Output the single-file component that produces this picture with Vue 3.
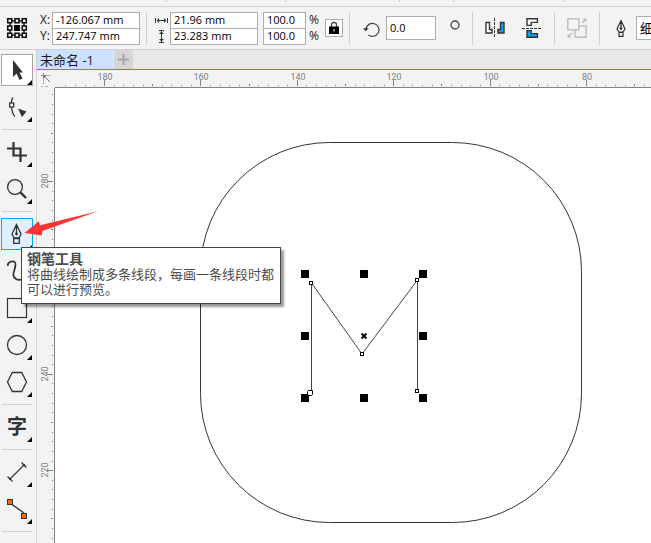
<script setup>
import { ref } from 'vue'

const posX = ref('-126.067 mm')
const posY = ref('247.747 mm')
const sizeW = ref('21.96 mm')
const sizeH = ref('23.283 mm')
const scaleX = ref('100.0')
const scaleY = ref('100.0')
const angle = ref('0.0')
const outline = ref('细')

const STEP = 9.64
// Ruler ticks: every fifth is taller, every tenth carries a number.
function ticks(origin, first, last, value) {
  const list = []
  for (let i = first; i <= last; i++) {
    const mod = ((i % 10) + 10) % 10
    list.push({
      at: Math.round(origin + i * STEP),
      len: mod === 0 ? 6 : mod === 5 ? 2 : 1,
      label: mod === 0 ? value - i * 2 : null
    })
  }
  return list
}
const hTicks = ticks(49, -4, 59, 180)
const vTicks = ticks(93, -9, 39, 280)

const handles = [301, 360, 419].flatMap(x => [270, 332, 394].map(y => ({ x, y })))
  .filter(h => !(h.x === 360 && h.y === 332))
const nodes = [[311, 283], [362, 354], [417, 280], [417, 391]]
const stripMarks = [166, 285, 399, 453, 563]
</script>

<template>
  <div class="app">
    <div class="strip">
      <svg class="strip-svg" aria-hidden="true">
        <rect v-for="m in stripMarks" :key="m" :x="m" y="0" width="1" height="2" fill="#d0d0d0" />
      </svg>
    </div>

    <header class="props">
      <svg class="origin" width="22" height="22" viewBox="0 0 22 22" aria-label="Object origin">
        <path d="M4 4H18V18H4Z" fill="none" stroke="#222" stroke-width="1.5" />
        <g fill="#fff" stroke="#111" stroke-width="1.6">
          <rect x="1.75" y="1.75" width="4" height="4" /><rect x="9" y="1.75" width="4" height="4" /><rect x="16.25" y="1.75" width="4" height="4" />
          <rect x="1.75" y="9" width="4" height="4" /><rect x="16.25" y="9" width="4" height="4" />
          <rect x="1.75" y="16.25" width="4" height="4" /><rect x="9" y="16.25" width="4" height="4" /><rect x="16.25" y="16.25" width="4" height="4" />
        </g>
        <rect x="8" y="8" width="6" height="6" fill="#000" />
      </svg>

      <div class="pair position">
        <label for="px">X:</label><input id="px" v-model="posX" class="wide" />
        <label for="py">Y:</label><input id="py" v-model="posY" class="wide" />
      </div>
      <i class="rule"></i>
      <div class="pair size">
        <label for="sw" aria-label="Width">
          <svg width="13" height="9" viewBox="0 0 13 9" fill="none" stroke="#333"><path d="M.5 2V7M12.5 2V7M2 4.5H11M3.5 2.5V6.5M9.5 2.5V6.5M2.5 3.5V5.5M10.5 3.5V5.5" /></svg>
        </label>
        <input id="sw" v-model="sizeW" class="wide" />
        <label for="sh" aria-label="Height">
          <svg width="13" height="13" viewBox="0 0 13 13" fill="none" stroke="#333"><path d="M4 .5H9M4 12.5H9M6.5 1V12M4.5 3.5H8.5M4.5 9.5H8.5M5.5 2.5H7.5M5.5 10.5H7.5" /></svg>
        </label>
        <input id="sh" v-model="sizeH" class="wide" />
      </div>
      <div class="pair scale">
        <input id="kx" v-model="scaleX" class="narrow" /><label for="kx">%</label>
        <input id="ky" v-model="scaleY" class="narrow" /><label for="ky">%</label>
      </div>
      <button class="lock" aria-label="Lock ratio">
        <svg width="12" height="14" viewBox="0 0 12 14">
          <path d="M3.5 6V3.5Q3.5 1.5 6 1.5T8.5 3.5V6" fill="none" stroke="#444" stroke-width="1.3" />
          <rect x="1" y="5.5" width="10" height="7.5" fill="#000" /><rect x="5.5" y="8" width="1" height="2.5" fill="#fff" />
        </svg>
      </button>
      <i class="rule"></i>
      <label class="turn" for="ang" aria-label="Angle">
        <svg width="17" height="17" viewBox="0 0 17 17"><path d="M3 8A6.5 6.5 0 1 1 5.3 13.9" fill="none" stroke="#444" stroke-width="1.2" /><path d="M0 7.3H5.6L2.8 10.3Z" fill="#333" /></svg>
      </label>
      <input id="ang" v-model="angle" class="angle" />
      <svg class="degree" width="10" height="18" viewBox="0 0 10 18"><circle cx="5" cy="6" r="4" fill="none" stroke="#444" stroke-width="1.3" /></svg>
      <i class="rule"></i>
      <button class="tool mirror" aria-label="Mirror horizontally">
        <svg width="20" height="20" viewBox="0 0 20 20">
          <path d="M1 4.5H4.5V11.5H7V15H1Z" fill="#fff" stroke="#333" stroke-width="1.4" />
          <path d="M19 4.5H15.5V11.5H13V15H19Z" fill="#0ba5ee" stroke="#333" stroke-width="1.4" />
          <path d="M9.5 0V20" stroke="#333" stroke-dasharray="3 1" />
        </svg>
      </button>
      <button class="tool" aria-label="Mirror vertically">
        <svg width="20" height="20" viewBox="0 0 20 20">
          <path d="M5 .8H15.4V4.4H9.2V7.4H5Z" fill="#fff" stroke="#333" stroke-width="1.4" />
          <path d="M5 19.2H15.4V15.6H9.2V12.6H5Z" fill="#0ba5ee" stroke="#333" stroke-width="1.4" />
          <path d="M0 10.5H20" stroke="#333" stroke-dasharray="3 1" />
        </svg>
      </button>
      <i class="rule"></i>
      <button class="tool" aria-label="Order">
        <svg width="20" height="20" viewBox="0 0 20 20" fill="none" stroke="#bcbcbc" stroke-width="1.4">
          <rect x=".8" y=".8" width="11" height="11" /><path d="M12 8H19.2V19.2H8V12" />
          <path d="M15 5L18 2M5 15L2 18" /><path d="M15.5 .5H19.5V4.5ZM.5 15.5V19.5H4.5Z" fill="#bcbcbc" stroke="none" />
        </svg>
      </button>
      <i class="rule"></i>
      <label class="nib" for="ol" aria-label="Outline width">
        <svg width="10" height="17" viewBox="0 0 10 17" fill="none" stroke="#333"><path d="M5 .5L9 9L7 12H3L1 9ZM5 1V8M3 12.5H7V16.3H3Z" stroke-width="1.2" /><circle cx="5" cy="8.5" r="1" fill="#333" /></svg>
      </label>
      <select id="ol" v-model="outline" class="outline"><option>细</option></select>
    </header>

    <div class="body">
      <nav class="toolbox">
        <button class="active" aria-label="Pick">
          <svg viewBox="0 0 32 32"><path d="M12 6V23L15.5 19.5L18.5 26L21.5 24.5L18.5 18.5H22Z" fill="#333" /><path d="M31 26V31H26Z" fill="#000" /></svg>
        </button>
        <button aria-label="Shape">
          <svg viewBox="0 0 32 32"><g fill="none" stroke="#333" stroke-width="1.3"><path d="M12 6.5Q10 8 10.5 15Q11 23 14 25.5" /><rect x="8.7" y="12" width="4" height="4" fill="#fff" /></g><path d="M17 17.5L25.5 20.5L21 26Z" fill="#333" /><path d="M31 26V31H26Z" fill="#000" /></svg>
        </button>
        <i></i>
        <button aria-label="Crop">
          <svg viewBox="0 0 32 32"><path d="M12.5 6V19.5H26M6 12.5H19.5V26" fill="none" stroke="#333" stroke-width="2.2" /><path d="M31 26V31H26Z" fill="#000" /></svg>
        </button>
        <button aria-label="Zoom">
          <svg viewBox="0 0 32 32"><circle cx="14" cy="14" r="7.4" fill="none" stroke="#333" stroke-width="1.3" /><path d="M19 19L25 25" stroke="#333" stroke-width="2.4" /><path d="M31 26V31H26Z" fill="#000" /></svg>
        </button>
        <i></i>
        <button class="hover" aria-label="钢笔工具">
          <svg viewBox="0 0 32 32"><path d="M15.5 6.5L20 16L18 20H13L11 16ZM15.5 7V15M12.7 20.5H18.3V25.3H12.7Z" fill="none" stroke="#333" stroke-width="1.3" /><circle cx="15.5" cy="16" r="1.4" fill="#333" /><path d="M31 27V31H27Z" fill="#000" /></svg>
        </button>
        <button aria-label="Curve">
          <svg viewBox="0 0 32 32"><path d="M7 11C6 7 14 4 14.5 9C15 15 9 20 15 24C19 26.5 24 23 23 18" fill="none" stroke="#333" stroke-width="1.7" /><path d="M31 26V31H26Z" fill="#000" /></svg>
        </button>
        <button aria-label="Rectangle">
          <svg viewBox="0 0 32 32"><rect x="6.5" y="6.5" width="19" height="19" fill="none" stroke="#333" stroke-width="1.2" /><path d="M31 26V31H26Z" fill="#000" /></svg>
        </button>
        <button aria-label="Ellipse">
          <svg viewBox="0 0 32 32"><circle cx="16" cy="16" r="9.5" fill="none" stroke="#333" stroke-width="1.3" /><path d="M31 26V31H26Z" fill="#000" /></svg>
        </button>
        <button aria-label="Polygon">
          <svg viewBox="0 0 32 32"><path d="M6.5 16L11.3 6.5H20.7L25.5 16L20.7 25.5H11.3Z" fill="none" stroke="#333" stroke-width="1.3" /><path d="M31 26V31H26Z" fill="#000" /></svg>
        </button>
        <i></i>
        <button class="glyph" aria-label="Text">
          <span>字</span>
          <svg viewBox="0 0 32 32"><path d="M31 26V31H26Z" fill="#000" /></svg>
        </button>
        <i></i>
        <button aria-label="Dimension">
          <svg viewBox="0 0 32 32"><path d="M9 23L23 9M6.5 20.5L11.5 25.5M20.5 6.5L25.5 11.5" fill="none" stroke="#333" stroke-width="1.2" /><path d="M8 24V21L11 24ZM24 8V11L21 8Z" fill="#333" /><path d="M31 26V31H26Z" fill="#000" /></svg>
        </button>
        <button aria-label="Connector">
          <svg viewBox="0 0 32 32"><path d="M9 10L23 20" stroke="#333" stroke-width="1.4" /><g fill="#f60" stroke="#333"><rect x="6.5" y="6.5" width="5" height="5" /><rect x="20.5" y="20.5" width="5" height="5" /></g><path d="M31 26V31H26Z" fill="#000" /></svg>
        </button>
        <i></i>
      </nav>

      <main class="doc">
        <div class="tabs">
          <button class="tab">未命名 -1</button>
          <button class="plus" aria-label="New document">
            <svg width="11" height="11" viewBox="0 0 11 11"><path d="M5.5 0V11M0 5.5H11" stroke="#a6a6a6" stroke-width="2" /></svg>
          </button>
        </div>
        <div class="grid">
          <div class="corner">
            <svg width="17" height="18" viewBox="0 0 17 18" fill="none" stroke="#999">
              <path d="M4 5.5H14M6.5 3V14" stroke-dasharray="2 1" /><path d="M7 6L13 12" stroke="#777" /><path d="M6 5H10L6 9Z" fill="#777" stroke="none" />
              <path d="M4 16.5H6M8 16.5H11" stroke="#b0b0b0" />
            </svg>
          </div>
          <svg class="ruler-h">
            <g v-for="t in hTicks" :key="t.at">
              <rect :x="t.at" :y="16 - t.len" width="1" :height="t.len" fill="#808080" />
              <text v-if="t.label !== null" :x="t.at + 1" y="10" text-anchor="middle">{{ t.label }}</text>
            </g>
          </svg>
          <svg class="ruler-v">
            <g v-for="t in vTicks" :key="t.at">
              <rect :x="16 - t.len" :y="t.at" :width="t.len" height="1" fill="#808080" />
              <text v-if="t.label !== null" :transform="`translate(11 ${t.at}) rotate(-90)`" text-anchor="middle">{{ t.label }}</text>
            </g>
          </svg>
          <svg class="canvas">
            <g transform="translate(-55 -88)">
              <rect x="200.5" y="142.5" width="381" height="380" rx="129" fill="none" stroke="#3a3232" />
              <path d="M311.5 393V283L362 354L417.5 280V391" fill="none" stroke="#444" />
              <rect v-for="h in handles" :key="`${h.x}-${h.y}`" :x="h.x" :y="h.y" width="8" height="8" fill="#000" />
              <rect v-for="n in nodes" :key="n.join()" :x="n[0] - 1.5" :y="n[1] - 1.5" width="3" height="3" fill="#fff" stroke="#000" />
              <path d="M308.5 390.5H312.5V394.5L311.5 395.5H307.5V391.5Z" fill="#fff" stroke="#000" />
              <path d="M361.5 333.5L366.5 338.5M366.5 333.5L361.5 338.5" stroke="#000" stroke-width="2" />
            </g>
          </svg>
        </div>
      </main>
    </div>

    <svg class="pointer" width="76" height="28" viewBox="0 0 76 28" aria-hidden="true">
      <path d="M.5 23L14.7 11.3L16 15.2L74 1.2L18.5 21L17.7 25.5Z" fill="#f93535" />
    </svg>
    <div class="tip" role="tooltip">
      <strong>钢笔工具</strong>
      <p>将曲线绘制成多条线段，每画一条线段时都可以进行预览。</p>
    </div>
  </div>
</template>

<style>
body {
  background: #fff;
}
</style>

<style scoped>
.app {
  position: relative;
  display: flex;
  flex-direction: column;
  height: 100vh;
  overflow: hidden;
  background: #f3f3f3;
  color: #1a1a1a;
  font: 12px/16px "Open Sans", "Noto Sans CJK SC", sans-serif;
}
.app * {
  box-sizing: border-box;
}
svg {
  display: block;
}
button {
  padding: 0;
  border: 0;
  background: none;
  font: inherit;
  color: inherit;
}
.strip {
  flex: none;
  height: 7px;
  border-bottom: 1px solid #d4d4d4;
}
.strip-svg {
  width: 100%;
  height: 6px;
}
.props {
  flex: none;
  display: flex;
  align-items: center;
  height: 43px;
  padding: 0 0 0 6px;
  border-bottom: 1px solid #d0d0d0;
  overflow: hidden;
}
.props > * {
  flex: none;
}
.pair {
  display: grid;
  grid-template-rows: 16px 16px;
  align-items: center;
}
.position {
  grid-template-columns: 12px 88px;
  margin: 0 6px 0 12px;
}
.size {
  grid-template-columns: 15px 88px;
  margin: 0 5px 0 8px;
}
.scale {
  grid-template-columns: 43px 14px;
}
.scale label {
  padding-left: 3px;
}
.props input,
.outline {
  min-width: 0;
  height: 17px;
  margin: 0;
  padding: 0 3px 1px;
  border: 1px solid #adadad;
  border-radius: 0;
  background: #fff;
  color: #000;
  font: 11px/14px "Open Sans", "Noto Sans CJK SC", sans-serif;
  outline: none;
}
.rule {
  width: 1px;
  height: 33px;
  background: #d0d0d0;
}
.lock {
  display: flex;
  align-items: center;
  justify-content: center;
  width: 18px;
  height: 18px;
  margin: 0 6px 0 5px;
  border: 1px solid #adadad;
  background: #fff;
}
.turn {
  margin: 2px 6px 0 13px;
}
.props .angle {
  width: 50px;
  height: 24px;
}
.degree {
  margin: 0 12px 0 14px;
}
.tool {
  margin: 0 12px;
}
.mirror {
  margin-right: 5px;
}
.nib {
  margin: 0 10px 0 16px;
}
.props .outline {
  width: 100px;
  height: 24px;
  appearance: none;
  font-size: 13px;
}
.body {
  flex: 1;
  display: flex;
  min-height: 0;
}
.toolbox {
  flex: none;
  display: flex;
  flex-direction: column;
  gap: 5px;
  width: 37px;
  padding: 4px 3px 0 1px;
  border-right: 1px solid #d4d4d4;
  overflow: hidden;
}
.toolbox i {
  flex: none;
  height: 3px;
  margin: 0 1px;
  border: solid #f3f3f3;
  border-width: 1px 0;
  background: #d0d0d0;
}
.toolbox button {
  flex: none;
  display: grid;
  width: 32px;
  height: 32px;
}
.toolbox button > * {
  grid-area: 1 / 1;
}
.toolbox .active,
.toolbox .hover {
  background: #fff;
  box-shadow: inset 0 0 0 1px #a6a6a6;
}
.toolbox .hover {
  background: #e0efff;
  box-shadow: inset 0 0 0 1px #0ba5ee;
}
.glyph span {
  color: #333;
  font: 700 20px/30px "Noto Sans CJK SC", sans-serif;
}
.doc {
  flex: 1;
  display: flex;
  flex-direction: column;
  min-width: 0;
}
.tabs {
  flex: none;
  display: flex;
  gap: 1px;
  height: 20px;
  border-bottom: 1px solid #0ba5ee;
  background: #e8e8e8;
}
.tab {
  width: 76px;
  padding-left: 3px;
  background: #cce0ff;
  font: 13px/18px "Open Sans", "Noto Sans CJK SC", sans-serif;
  text-align: left;
  white-space: nowrap;
}
.plus {
  display: flex;
  align-items: center;
  justify-content: center;
  width: 19px;
  background: #d6d6d6;
}
.grid {
  flex: 1;
  display: grid;
  grid-template: 18px minmax(0, 1fr) / 18px minmax(0, 1fr);
  min-height: 0;
}
.grid text {
  fill: #808080;
  font: 9px Roboto, sans-serif;
}
.ruler-h {
  width: 100%;
  height: 18px;
  border-bottom: 1px solid #808080;
}
.ruler-v {
  width: 18px;
  height: 100%;
  border-right: 1px solid #808080;
}
.canvas {
  width: 100%;
  height: 100%;
  background: #fff;
}
.pointer {
  position: absolute;
  left: 24px;
  top: 210px;
}
.tip {
  position: absolute;
  left: 21px;
  top: 247px;
  width: 260px;
  padding: 2px 5px 7px;
  border: 1px solid #444;
  background: #fff;
  box-shadow: 3px 3px 2px rgba(0, 0, 0, 0.4);
  color: #4c4c4c;
  font: 13px/15px "Noto Sans CJK SC", sans-serif;
}
.tip strong {
  display: block;
  font-size: 14px;
  line-height: 16px;
}
.tip p {
  margin: 0;
}
</style>
